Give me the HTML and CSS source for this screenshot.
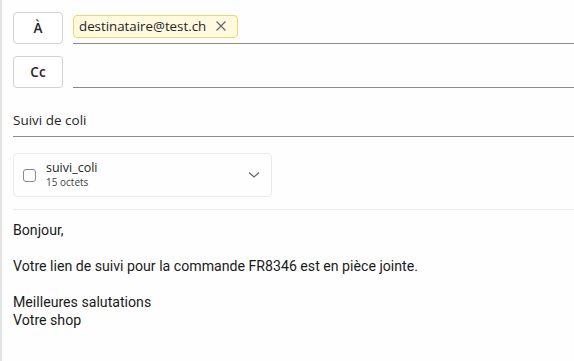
FILE: index.html
```html
<!DOCTYPE html>
<html lang="fr">
<head>
<meta charset="utf-8">
<link rel="stylesheet" href="styles.css">
</head>
<body>
<div class="compose">
  <div class="recipient-row">
    <button class="field-btn">À</button>
    <div class="recipient-field field-to">
      <span class="chip">destinataire@test.ch
        <svg class="chip-x" width="10" height="10" viewBox="0 0 10 10"><path d="M0.5 0.5 L9.5 9.5 M9.5 0.5 L0.5 9.5" stroke="#616161" stroke-width="1.1" fill="none"/></svg>
      </span>
    </div>
  </div>
  <div class="recipient-row row-cc">
    <button class="field-btn">Cc</button>
    <div class="recipient-field"></div>
  </div>
  <div class="subject">Suivi de coli</div>
  <div class="attachment">
    <span class="checkbox"></span>
    <div class="att-info">
      <div class="att-name">suivi_coli</div>
      <div class="att-size">15 octets</div>
    </div>
    <svg class="chevron" width="12" height="8" viewBox="0 0 12 8"><path d="M1 1.5 L6 6 L11 1.5" stroke="#616161" stroke-width="1.2" fill="none"/></svg>
  </div>
  <div class="separator"></div>
  <div class="message">
    <div>Bonjour,</div>
    <div class="blank"></div>
    <div>Votre lien de suivi pour la commande FR8346 est en pièce jointe.</div>
    <div class="blank"></div>
    <div>Meilleures salutations</div>
    <div>Votre shop</div>
  </div>
</div>
</body>
</html>
```
FILE: styles.css
```css
html, body {
  margin: 0;
  padding: 0;
  background: #fefefe;
}
.compose {
  border-left: 2px solid #e3e3e3;
  padding-left: 11px;
  min-height: 361px;
  box-sizing: border-box;
  font-family: "Open Sans", "Noto Sans", sans-serif;
  color: #242424;
}
.recipient-row {
  display: flex;
  gap: 10px;
  padding-top: 12px;
}
.row-cc {
  padding-top: 12px;
}
.field-btn {
  width: 50px;
  height: 32px;
  border: 1px solid #d1d1d1;
  border-radius: 4px;
  background: #fff;
  font-family: "Open Sans", sans-serif;
  font-weight: 600;
  font-size: 13.5px;
  color: #242424;
  padding: 0;
  flex: none;
}
.recipient-field {
  flex: 1;
  height: 32px;
  box-sizing: border-box;
  border-bottom: 1px solid #8a8a8a;
  padding-top: 2px;
}
.chip {
  display: inline-flex;
  align-items: center;
  height: 23px;
  box-sizing: border-box;
  border: 1px solid #f3d36a;
  border-radius: 4px;
  background: #fff9e0;
  padding: 0 11px 0 5px;
  font-size: 13.3px;
  color: #242424;
  gap: 10px;
}
.chip-x {
  display: block;
}
.subject {
  margin-top: 12px;
  height: 37px;
  box-sizing: border-box;
  border-bottom: 1px solid #8a8a8a;
  display: flex;
  align-items: center;
  font-size: 13.5px;
  padding-top: 3px;
}
.attachment {
  margin-top: 16px;
  width: 259px;
  height: 44px;
  box-sizing: border-box;
  border: 1px solid #ebebeb;
  border-radius: 4px;
  display: flex;
  align-items: center;
  padding-left: 9px;
  padding-right: 11px;
}
.checkbox {
  width: 13px;
  height: 13px;
  box-sizing: border-box;
  border: 1px solid #8a8a8a;
  border-radius: 3px;
  background: #fff;
  flex: none;
}
.att-info {
  margin-left: 10px;
  flex: 1;
  padding-bottom: 2px;
}
.att-name {
  font-size: 12.5px;
  line-height: 16px;
}
.att-size {
  font-size: 10px;
  line-height: 12px;
  color: #424242;
}
.chevron {
  flex: none;
}
.separator {
  margin-top: 12px;
  height: 1px;
  background: #ebebeb;
}
.message {
  padding-top: 11px;
  font-family: "Roboto", "Liberation Sans", sans-serif;
  font-size: 14.15px;
  line-height: 18px;
  color: #1a1a1a;
}
.blank {
  height: 18px;
}
```
